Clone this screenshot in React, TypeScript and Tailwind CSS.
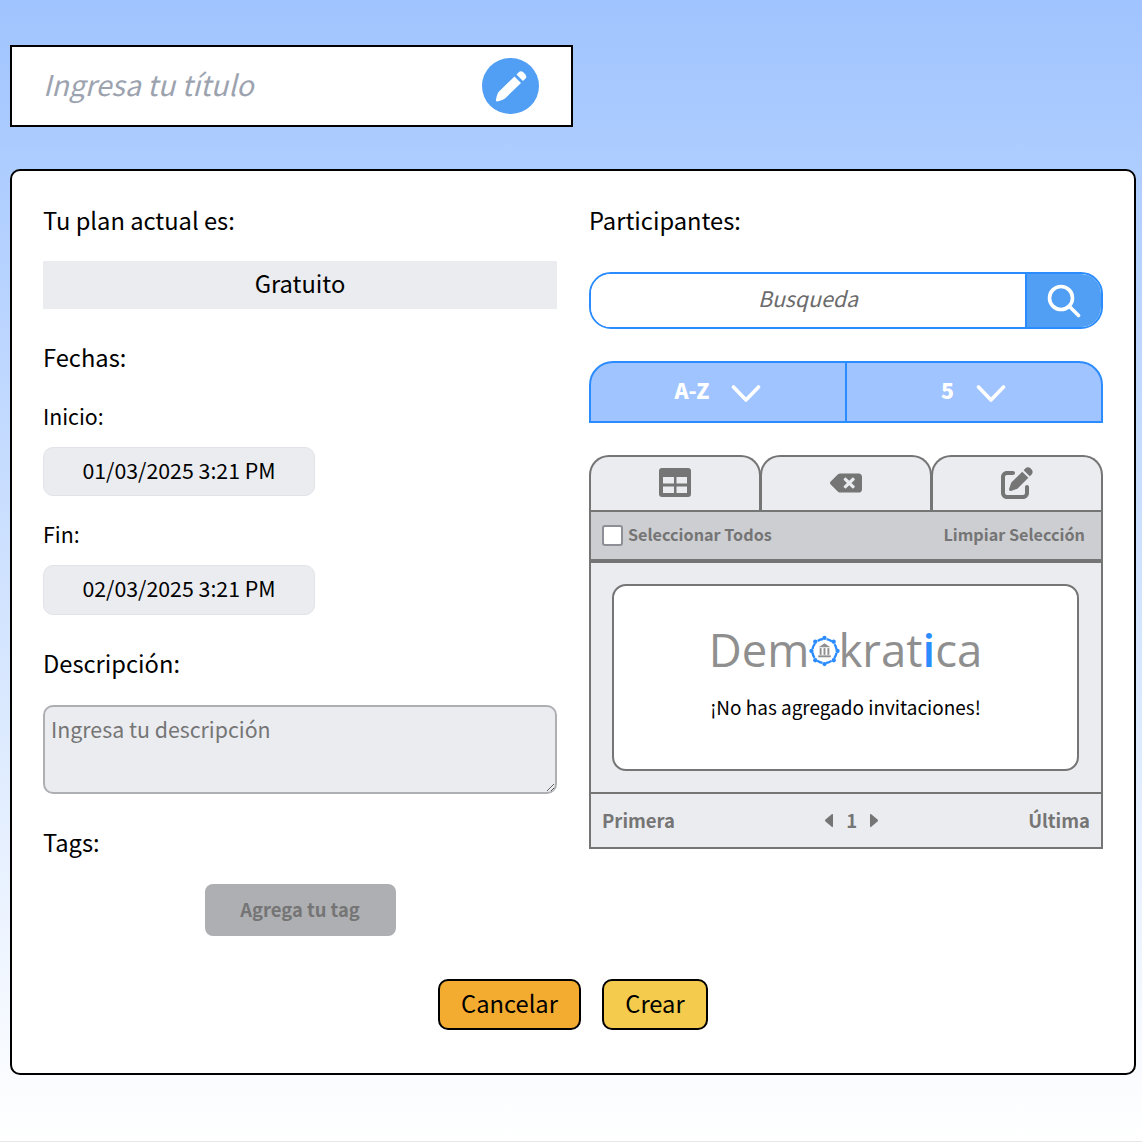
import { FaBackspace } from "react-icons/fa";
import { FaPenToSquare } from "react-icons/fa6";

const font = { fontFamily: '"Noto Sans CJK JP", sans-serif' };

function Chevron() {
  return (
    <svg width="30" height="20" viewBox="0 0 30 20" fill="none" stroke="white" strokeWidth="3.6" strokeLinecap="round" strokeLinejoin="round" className="mt-[4px]" aria-hidden="true">
      <path d="M2.5 3 L15 16 L27.5 3" />
    </svg>
  );
}

function TableIcon() {
  return (
    <svg width="32" height="29" viewBox="0 0 32 29" aria-hidden="true">
      <rect width="32" height="29" rx="3" fill="#757575" />
      <rect x="4" y="9" width="11" height="6.5" fill="#ebecf0" />
      <rect x="17.5" y="9" width="10.5" height="6.5" fill="#ebecf0" />
      <rect x="4" y="18.5" width="11" height="6.5" fill="#ebecf0" />
      <rect x="17.5" y="18.5" width="10.5" height="6.5" fill="#ebecf0" />
    </svg>
  );
}

function Pencil() {
  return (
    <svg width="32" height="32" viewBox="0 0 32 32" fill="white" aria-hidden="true">
      <path d="M19.5 6.5 L26 13 L10 28.5 Q8 30 2.5 31.5 Q0.5 31.5 1 29.5 Q2 24 3.5 22 Z" />
      <path d="M21.5 4.5 L24 2 Q26 0.5 28 2 L30.5 4.5 Q32 6.5 30.5 8.5 L28 11 Z" />
    </svg>
  );
}

function Caret({ flip }: { flip?: boolean }) {
  return (
    <svg width="9" height="15" viewBox="0 0 9 15" className={flip ? "rotate-180" : ""} aria-hidden="true">
      <path d="M8 1 L1.5 6.5 Q0.5 7.5 1.5 8.5 L8 14 Q9 14.5 9 13 V2 Q9 0.5 8 1 Z" fill="#757575" />
    </svg>
  );
}

function LogoMark() {
  const dots = [0, 45, 90, 135, 180, 225, 270, 315];
  return (
    <svg width="31" height="36" viewBox="0 0 32 36" className="-mr-[2px] mt-[1px]" aria-hidden="true">
      <circle cx="16" cy="18" r="12.5" fill="none" stroke="#2b8cff" strokeWidth="2.4" strokeDasharray="6 3.8" strokeDashoffset="-2" />
      {dots.map((a) => (
        <circle
          key={a}
          cx={16 + 13.5 * Math.sin((a * Math.PI) / 180)}
          cy={18 - 13.5 * Math.cos((a * Math.PI) / 180)}
          r="2.2"
          fill="#2b8cff"
        />
      ))}
      <path d="M16 10 L22 14 H10 Z" fill="#8f8f8f" />
      <rect x="11" y="15" width="2" height="7" fill="#8f8f8f" />
      <rect x="15" y="15" width="2" height="7" fill="#8f8f8f" />
      <rect x="19" y="15" width="2" height="7" fill="#8f8f8f" />
      <rect x="9.5" y="22.5" width="13" height="2" fill="#8f8f8f" />
    </svg>
  );
}

export default function App() {
  return (
    <div style={font} className="h-[1142px] w-[1142px] overflow-hidden border-b border-[#e5e7eb] bg-gradient-to-b from-[#a0c4ff] to-white pl-[10px] pt-[45px] text-black">
      <div className="flex h-[82px] w-[563px] items-center border-2 border-black bg-white pl-[31px] pr-[32px]">
        <input
          placeholder="Ingresa tu título"
          className="min-w-0 flex-1 bg-transparent pb-[4px] text-[28.5px] italic outline-none placeholder:text-[#9ca3af]"
        />
        <div className="flex h-[56px] w-[57px] items-center justify-center rounded-full bg-[#519ff5]">
          <Pencil />
        </div>
      </div>

      <div className="mt-[42px] flex h-[906px] w-[1126px] gap-[32px] rounded-[10px] border-2 border-black bg-white pl-[31px] pt-[30px]">
        <div className="w-[514px]">
          <div className="flex h-[40px] items-center text-[23.7px]">Tu plan actual es:</div>
          <div className="mt-[20px] flex h-[48px] items-center justify-center bg-[#ebecf0] pb-[3px] text-[23.7px]">Gratuito</div>
          <div className="mt-[29px] flex h-[40px] items-center text-[23.7px]">Fechas:</div>
          <div className="mt-[19px] flex h-[40px] items-center pb-[3px] text-[21.33px]">Inicio:</div>
          <div className="mt-[10px] flex h-[49px] w-[272px] items-center justify-center rounded-[10px] border border-[#e2e3e8] bg-[#ebecf0] pb-[3px] text-[21.33px]">01/03/2025 3:21 PM</div>
          <div className="mt-[19px] flex h-[40px] items-center pb-[3px] text-[21.33px]">Fin:</div>
          <div className="mt-[10px] flex h-[50px] w-[272px] items-center justify-center rounded-[10px] border border-[#e2e3e8] bg-[#ebecf0] pb-[5px] text-[21.33px]">02/03/2025 3:21 PM</div>
          <div className="mt-[29px] flex h-[40px] items-center text-[23.7px]">Descripción:</div>
          <textarea
            placeholder="Ingresa tu descripción"
            className="mt-[21px] block h-[89px] w-[514px] rounded-[10px] border-2 border-[#aeafb3] bg-[#ebecf0] px-[6px] pb-[6px] pt-[5px] text-[21.33px] leading-[34px] outline-none placeholder:text-[#757575]"
          />
          <div className="mt-[29px] flex h-[40px] items-center text-[23.7px]">Tags:</div>
          <div className="mt-[21px] flex justify-center">
            <button className="h-[52px] w-[191px] rounded-[8px] bg-[#aeafb3] text-[18.4px] font-bold text-[#757575]">Agrega tu tag</button>
          </div>
          <div className="ml-[395px] mt-[43px] flex w-[270px] gap-[21px]">
            <button className="h-[51px] w-[143px] shrink-0 rounded-[10px] border-2 border-black bg-[#f3ac2f] pb-[2px] text-[23.7px]">Cancelar</button>
            <button className="h-[51px] w-[106px] shrink-0 rounded-[10px] border-2 border-black bg-[#f4cb4d] pb-[2px] text-[23.7px]">Crear</button>
          </div>
        </div>

        <div className="w-[514px]">
          <div className="flex h-[40px] items-center text-[23.7px]">Participantes:</div>
          <div className="mt-[31px] flex h-[57px] overflow-hidden rounded-[22px] border-2 border-[#2b8cff]">
            <input
              placeholder="Busqueda"
              className="min-w-0 flex-1 bg-white pb-[5px] text-center text-[21.33px] italic outline-none placeholder:text-[#6b6b6b]"
            />
            <div className="flex w-[76px] items-center justify-center border-l-2 border-[#2b8cff] bg-[#519ff5]">
              <svg width="34" height="34" viewBox="0 0 34 34" fill="none" stroke="white" strokeWidth="3.6" strokeLinecap="round" aria-hidden="true">
                <circle cx="14" cy="14" r="11.5" />
                <path d="M22.5 22.5 L31.5 31.5" />
              </svg>
            </div>
          </div>
          <div className="mt-[32px] flex h-[62px] overflow-hidden rounded-t-[24px] border-2 border-[#2b8cff] bg-[#a0c4ff] font-black text-white">
            <div className="flex flex-1 items-center justify-center gap-[22px] border-r-2 border-[#2b8cff] text-[21.33px]">
              <span className="pb-[4px]">A-Z</span>
              <Chevron />
            </div>
            <div className="flex flex-1 items-center justify-center gap-[22px] text-[21.33px]">
              <span className="pb-[4px]">5</span>
              <Chevron />
              <span className="-ml-[22px] w-[1px]" />
            </div>
          </div>

          <div className="mt-[32px] flex h-[55px]">
            <div className="flex w-[172px] items-center justify-center rounded-t-[20px] border-2 border-b-0 border-[#757575] bg-[#ebecf0] pb-[2px]"><TableIcon /></div>
            <div className="-ml-[1px] flex w-[172px] items-center justify-center rounded-t-[20px] border-2 border-b-0 border-[#757575] bg-[#ebecf0] pb-[2px] text-[#757575]"><FaBackspace size={32} /></div>
            <div className="-ml-[1px] flex w-[172px] items-center justify-center rounded-t-[20px] border-2 border-b-0 border-[#757575] bg-[#ebecf0] pb-[2px] text-[#757575]"><FaPenToSquare size={32} /></div>
          </div>

          <div className="flex h-[339px] flex-col border-2 border-[#757575] bg-[#ebecf0]">
            <div className="flex h-[51px] shrink-0 items-center justify-between border-b-4 border-[#757575] bg-[#cdced2] pl-[11px] pr-[16px] text-[16.2px] font-bold text-[#757575]">
              <div className="flex items-center gap-[5px]">
                <span className="block h-[21px] w-[21px] rounded-[3px] border-2 border-[#8d8e96] bg-white" />
                <span className="pb-[2px]">Seleccionar Todos</span>
              </div>
              <span className="pb-[2px]">Limpiar Selección</span>
            </div>
            <div className="flex-1 pl-[21px] pr-[22px] pt-[21px]">
              <div className="flex h-[187px] flex-col items-center rounded-[14px] border-2 border-[#757575] bg-white pt-[36px]">
                <div style={{ fontFamily: '"Open Sans", sans-serif' }} className="flex h-[56px] items-center text-[45.5px] leading-none text-[#8f8f8f]">
                  <span>Dem</span>
                  <LogoMark />
                  <span>krat</span>
                  <span className="font-semibold text-[#2b8cff]">i</span>
                  <span>ca</span>
                </div>
                <div className="mt-[15px] text-[18.95px]">¡No has agregado invitaciones!</div>
              </div>
            </div>
            <div className="flex h-[55px] shrink-0 items-center justify-between border-t-2 border-[#757575] pl-[11px] pr-[11px] text-[18.5px] font-bold text-[#757575]">
              <span>Primera</span>
              <div className="flex items-center gap-[13px]">
                <Caret />
                <span>1</span>
                <Caret flip />
              </div>
              <span>Última</span>
            </div>
          </div>
        </div>
      </div>
    </div>
  );
}
